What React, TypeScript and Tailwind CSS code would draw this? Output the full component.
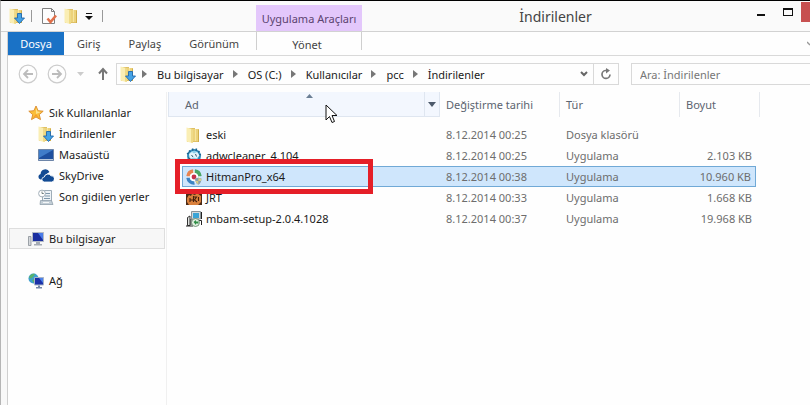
import type { ReactNode } from 'react'
import clsx from 'clsx'

const tabs = ['Giriş', 'Paylaş', 'Görünüm']
const crumbs = ['Bu bilgisayar', 'OS (C:)', 'Kullanıcılar', 'pcc', 'İndirilenler']

function FolderIcon({ download = false }: { download?: boolean }) {
  return (
    <svg width="16" height="16" viewBox="0 0 16 16" className="shrink-0" aria-hidden="true">
      <path d="M1 1h8v1h4v13H1z" fill="#dfc064" />
      <path d="M7 2h5v12H7z" fill="#ecd27a" />
      <path d="M.5.500L6 2v14L.5 14.500z" fill="#faeeb4" />
      <path d="M5 1.700l2 .5V16l-2-.4z" fill="#efda88" />
      <path d="M9 2h1v12H9z" fill="#f6e5a0" />
      <path d="M12 3h1v12h-1z" fill="#cfae4c" />
      {download && (
        <path d="M8.500 5.500h4v4.500h3l-5 5.500-5-5.500h3z" fill="#45a3e6" stroke="#1f69ae" strokeWidth=".9" />
      )}
    </svg>
  )
}

function PropertiesIcon() {
  return (
    <svg width="16" height="16" viewBox="0 0 16 16" aria-hidden="true">
      <path d="M.5.500h9l3 3v12H.5z" fill="#fdfdfd" stroke="#808080" />
      <path d="M9.500.500v3h3" fill="none" stroke="#808080" />
      <path d="M5.500 10.500l3 3.500 5.500-6.500" fill="none" stroke="#e0704a" strokeWidth="2.600" />
    </svg>
  )
}

function StarIcon() {
  return (
    <svg width="16" height="16" viewBox="0 0 16 16" aria-hidden="true">
      <path
        d="M8 1l2.100 4.700 5.100.5-3.900 3.400 1.200 5L8 12l-4.500 2.600 1.200-5L.8 6.200l5.100-.5z"
        fill="#fbbf3a"
        stroke="#d98a2b"
        strokeWidth=".9"
      />
      <path d="M8 3l1.400 3.500 3.600.4L8 9z" fill="#fde28c" />
      <path d="M8 9l3 4-3-1.700L4.800 13z" fill="#f59d2a" />
    </svg>
  )
}

function DesktopIcon() {
  return (
    <svg width="16" height="16" viewBox="0 0 16 16" aria-hidden="true">
      <path d="M.5 2.500h15v11H.5z" fill="#1d4f9f" stroke="#6d85a8" />
      <path d="M1 3h14L1 11z" fill="#3f7cc9" />
      <path d="M1 12h14v1H1z" fill="#b7c8dc" />
    </svg>
  )
}

function SkyDriveIcon() {
  return (
    <svg width="16" height="16" viewBox="0 0 16 16" aria-hidden="true">
      <path d="M2.500 11.500a2.900 2.900 0 0 1 .1-5.600A4.700 4.700 0 0 1 11.500 4L7 7l-2 4.500z" fill="#124a93" />
      <path
        d="M6.500 14a2.500 2.500 0 0 1-.2-5 3.600 3.600 0 0 1 6.600-1.200 3.100 3.100 0 0 1 .8 6.200z"
        fill="#124a93"
        stroke="#fff"
        strokeWidth=".8"
      />
    </svg>
  )
}

function RecentIcon() {
  return (
    <svg width="16" height="16" viewBox="0 0 16 16" aria-hidden="true">
      <path d="M4.500 1.500h9v11h-9z" fill="#eef3f7" stroke="#9fadb8" />
      <path d="M7 4.500h5M7 7h5M6 9.500h6" stroke="#7e97ab" />
      <path d="M2.500 11.500h11l1.500 4H2z" fill="#c3ced6" stroke="#8796a3" strokeWidth=".7" />
      <path d="M5 13.500h6" stroke="#f5f7f8" />
      <circle cx="4" cy="4.500" r="3.400" fill="#fff" stroke="#a3afb9" />
      <path d="M4 2.500v2h1.800" fill="none" stroke="#566" strokeWidth=".8" />
    </svg>
  )
}

function ComputerIcon() {
  return (
    <svg width="16" height="16" viewBox="0 0 16 16" aria-hidden="true">
      <path d="M.5 5.500H3v9H.5z" fill="#d5d8dc" stroke="#888e96" strokeWidth=".8" />
      <path d="M4.500 1.500h11v9h-11z" fill="#1a2ea0" stroke="#b3bac6" />
      <path d="M10 2h5v7z" fill="#4a7be8" />
      <path d="M8 11h4v2h2v1.500H6V13h2z" fill="#a5abb4" />
    </svg>
  )
}

function NetworkIcon() {
  return (
    <svg width="16" height="16" viewBox="0 0 16 16" aria-hidden="true">
      <circle cx="5.500" cy="5.500" r="5" fill="#3d9fd0" />
      <path d="M2 2.500c2-2 4-2 5-1.500L5 4 3 5.500 1 5zM4 7l3-1 1 2-2 2.500z" fill="#58b36b" />
      <path d="M6.500 4.500h9V12h-9z" fill="#1b31a8" stroke="#a9b4c6" />
      <path d="M11 5h4v5z" fill="#4d82ea" />
      <path d="M10 12.500h2V14h2v1.500H8V14h2z" fill="#7487a7" />
    </svg>
  )
}

function AdwCleanerIcon() {
  return (
    <svg width="16" height="16" viewBox="0 0 16 16" aria-hidden="true">
      <circle cx="8" cy="8" r="7" fill="#2f8dbd" />
      <path
        d="M1 6l2-1M3 2.500l1.500 1.500M6.500.500L7 3M10.500.500L10 3M13.500 3L12 4.500M15 6.500l-2 .5"
        stroke="#1c6490"
        strokeWidth="1.500"
      />
      <circle cx="8" cy="7.500" r="4.800" fill="#8bd0ea" />
      <path d="M3 6l3-2 2 1.500L11 4l2.500 3.500-3 3-3-1L4 11z" fill="#e3f4fa" />
      <path d="M5.500 7l1.500 2M9.500 6l1 2.500M2 9.500l3 2" fill="none" stroke="#345c75" />
    </svg>
  )
}

function HitmanIcon() {
  return (
    <svg width="16" height="16" viewBox="0 0 16 16" fill="none" aria-hidden="true">
      <circle cx="8" cy="8" r="6" fill="#fff" />
      <path d="M2 7.300A6 6 0 0 1 7.200 2" stroke="#e88450" strokeWidth="3.400" />
      <path d="M8.800 2A6 6 0 0 1 14 7.300" stroke="#4aa565" strokeWidth="3.400" />
      <path d="M2 8.700A6 6 0 0 0 8.500 14" stroke="#3c84c4" strokeWidth="3.400" />
      <circle cx="8" cy="8" r="2.400" fill="#c8304a" />
      <path d="M9 9.500l3.500-1 3 1c0 3-1 5-3.200 6.200C10 14.500 9 12.500 9 9.500z" fill="#8ba0ad" />
      <path d="M12.400 9v3H9.600c.4 1.500 1.400 2.500 2.700 3.300V12h2.800l.2-2.300z" fill="#d8cf8a" />
    </svg>
  )
}

function JrtIcon() {
  return (
    <svg width="16" height="16" viewBox="0 0 16 16" aria-hidden="true">
      <path d="M0 0h16v15H0z" fill="#4a2a16" />
      <path d="M1 8l2-3 2 1 1-2 3 1 2-2 4 3v6l-3 3H3L1 12z" fill="#d9803c" />
      <path d="M4 8v4M4 10h3M7.500 6v6M8 7h2.500l-2 3 2.500 2M12.500 7v4" fill="none" stroke="#43200d" strokeWidth="1.100" />
    </svg>
  )
}

function SetupIcon() {
  return (
    <svg width="16" height="16" viewBox="0 0 16 16" aria-hidden="true">
      <path d="M5.500.500h9v7.500h-9z" fill="#d5dadc" stroke="#8a9498" />
      <path d="M7 2h6v5H7z" fill="#3aa4d6" />
      <path d="M15.500 1v7M13 9.500h2.500V14" fill="none" stroke="#222" />
      <path d="M1.500 6.500L4 5v9.500H1.500z" fill="#dfe2df" stroke="#333" />
      <path d="M0 15h7M5 8v6" stroke="#222" />
      <circle cx="9.500" cy="11.500" r="4" fill="#e1efe1" stroke="#5d7d63" strokeWidth=".8" />
      <path d="M7.500 11l2.500-2v1.500h2.500v2H10V14z" fill="#2f8d46" />
    </svg>
  )
}

type FileRow = {
  name: string
  date: string
  type: string
  size: string
  icon: ReactNode
  selected?: boolean
}

const files: FileRow[] = [
  { name: 'eski', date: '8.12.2014 00:25', type: 'Dosya klasörü', size: '', icon: <FolderIcon /> },
  { name: 'adwcleaner_4.104', date: '8.12.2014 00:25', type: 'Uygulama', size: '2.103 KB', icon: <AdwCleanerIcon /> },
  { name: 'HitmanPro_x64', date: '8.12.2014 00:38', type: 'Uygulama', size: '10.960 KB', icon: <HitmanIcon />, selected: true },
  { name: 'JRT', date: '8.12.2014 00:33', type: 'Uygulama', size: '1.668 KB', icon: <JrtIcon /> },
  { name: 'mbam-setup-2.0.4.1028', date: '8.12.2014 00:37', type: 'Uygulama', size: '19.968 KB', icon: <SetupIcon /> },
]

const favorites = [
  { label: 'İndirilenler', icon: <FolderIcon download /> },
  { label: 'Masaüstü', icon: <DesktopIcon /> },
  { label: 'SkyDrive', icon: <SkyDriveIcon /> },
  { label: 'Son gidilen yerler', icon: <RecentIcon /> },
]

function TitleBar() {
  return (
    <header className="flex h-[31px] border-b border-[#d2d2d2] bg-[#fafafa]">
      <div className="flex w-[255px] shrink-0 items-center pl-2">
        <FolderIcon download />
        <span className="ml-[6px] h-3 w-px bg-[#999]" />
        <button type="button" aria-label="Özellikler" className="ml-[10px]">
          <PropertiesIcon />
        </button>
        <button type="button" aria-label="Yeni klasör" className="ml-[6px]">
          <FolderIcon />
        </button>
        <button type="button" aria-label="Araç çubuğunu özelleştir" className="ml-[5px]">
          <svg width="8" height="8" viewBox="0 0 8 8">
            <path d="M1 1h6v1H1zM0 4h8L4 8z" fill="#111" />
          </svg>
        </button>
        <span className="ml-[9px] h-3 w-px bg-[#999]" />
      </div>
      <div className="mt-1 flex w-[106px] shrink-0 items-center justify-center bg-[#e3c7fb] text-[#5b4370]">
        Uygulama Araçları
      </div>
      <h1 className="flex-1 text-center text-[14px] leading-[31px] text-[#444]">İndirilenler</h1>
      <div className="flex w-[61px] shrink-0 items-start pt-px">
        <button type="button" aria-label="Simge durumuna küçült" className="ml-[7px] h-5 w-[18px]">
          <svg width="18" height="20" viewBox="0 0 18 20">
            <path d="M1 12h8v2H1z" fill="#111" />
          </svg>
        </button>
        <button type="button" aria-label="Ekranı kapla" className="ml-[8px] h-5 w-[19px]">
          <svg width="19" height="20" viewBox="0 0 19 20">
            <path d="M1 6h10v8H1zM2 8v5h8V8z" fill="#111" fillRule="evenodd" />
          </svg>
        </button>
        <button type="button" aria-label="Kapat" className="h-5 flex-1 bg-[#c75050]" />
      </div>
    </header>
  )
}

function Ribbon() {
  return (
    <nav className="flex h-6 border-b border-[#d9d9d9] text-[#444]">
      <button type="button" className="w-14 shrink-0 bg-[#1a72c6] pb-px text-white">
        Dosya
      </button>
      <div className="flex w-[192px] shrink-0 gap-1 pl-px">
        {tabs.map((tab) => (
          <button key={tab} type="button" className="px-3">
            {tab}
          </button>
        ))}
      </div>
      <button
        type="button"
        className="h-[18px] w-[106px] shrink-0 border-x border-[#cfcfcf] pt-[5px] pr-1"
      >
        Yönet
      </button>
      <button type="button" aria-label="Şeridi genişlet" className="ml-auto self-center">
        <svg width="3" height="6" viewBox="0 0 3 6">
          <path d="M0 1l3 3" stroke="#999" strokeWidth="1.500" />
        </svg>
      </button>
    </nav>
  )
}

function CrumbArrow() {
  return (
    <svg width="5" height="8" viewBox="0 0 5 8" className="shrink-0" aria-hidden="true">
      <path d="M0 0l5 4-5 4z" fill="#777" />
    </svg>
  )
}

function AddressBar() {
  return (
    <div className="flex h-9 items-center pl-[10px]">
      <button type="button" aria-label="Geri">
        <svg width="20" height="20" viewBox="0 0 20 20" fill="none">
          <circle cx="10" cy="10" r="8.800" stroke="#ccc" strokeWidth="1.200" />
          <path d="M15 10H6M10 6l-4 4 4 4" stroke="#bcbcbc" strokeWidth="1.800" />
        </svg>
      </button>
      <button type="button" aria-label="İleri" className="ml-[9px]">
        <svg width="20" height="20" viewBox="0 0 20 20" fill="none">
          <circle cx="10" cy="10" r="8.800" stroke="#ccc" strokeWidth="1.200" />
          <path d="M5 10h9M10 6l4 4-4 4" stroke="#bcbcbc" strokeWidth="1.800" />
        </svg>
      </button>
      <button type="button" aria-label="Son konumlar" className="ml-[10px]">
        <svg width="8" height="4" viewBox="0 0 8 4">
          <path d="M0 0h7L3.500 4z" fill="#ccc" />
        </svg>
      </button>
      <button type="button" aria-label="Yukarı" className="ml-3">
        <svg width="12" height="14" viewBox="0 0 12 14" fill="none">
          <path d="M6 13V2M2 6.500L6 2l4 4.500" stroke="#777" strokeWidth="2" />
        </svg>
      </button>
      <div className="ml-[7px] flex h-[22px] flex-1 items-center border border-[#d9d9d9] pl-[3px] text-[#1a1a1a]">
        <FolderIcon download />
        <ol className="ml-[6px] flex items-center gap-[9px]">
          {crumbs.map((crumb) => (
            <li key={crumb} className="flex items-center gap-[10px] whitespace-nowrap">
              <CrumbArrow />
              <a href="#">{crumb}</a>
            </li>
          ))}
        </ol>
        <button type="button" aria-label="Önceki konumlar" className="ml-auto px-[5px]">
          <svg width="8" height="6" viewBox="0 0 8 6" fill="none">
            <path d="M1 1l3 3 3-3" stroke="#666" strokeWidth="2" />
          </svg>
        </button>
        <button
          type="button"
          aria-label="Yenile"
          className="flex h-full w-[25px] items-center justify-center border-l border-[#d9d9d9]"
        >
          <svg width="12" height="12" viewBox="0 0 12 12" fill="none">
            <path d="M7 2.500H5.500A4 4 0 1 0 10 6.500" stroke="#777" strokeWidth="1.700" />
            <path d="M6 0l4 2.500L6 5.500z" fill="#777" />
          </svg>
        </button>
      </div>
      <input
        type="search"
        aria-label="Ara: İndirilenler"
        placeholder="Ara: İndirilenler"
        className="ml-3 h-[22px] w-[179px] border border-r-0 border-[#d9d9d9] pl-2 outline-none placeholder:text-[#777]"
      />
    </div>
  )
}

function Sidebar() {
  return (
    <aside className="w-[159px] shrink-0 border-r border-[#f0f0f0] pt-[10px] pl-px text-[#1a1a1a]">
      <a href="#" className="flex h-[21px] items-center gap-[5px] pl-[19px]">
        <StarIcon />
        Sık Kullanılanlar
      </a>
      <ul>
        {favorites.map((item) => (
          <li key={item.label}>
            <a href="#" className="flex h-[21px] items-center gap-[5px] pl-[29px]">
              {item.icon}
              {item.label}
            </a>
          </li>
        ))}
      </ul>
      <a
        href="#"
        className="mt-[21px] mr-px flex h-[21px] items-center gap-[5px] border border-[#dedede] bg-[#f7f7f7] pl-[18px]"
      >
        <ComputerIcon />
        Bu bilgisayar
      </a>
      <a href="#" className="mt-[21px] flex h-[21px] items-center gap-[5px] pl-[19px]">
        <NetworkIcon />
        Ağ
      </a>
    </aside>
  )
}

function FileTable() {
  return (
    <table className="w-[592px] table-fixed border-separate border-spacing-0 text-[#6d6d6d]">
      <colgroup>
        <col className="w-[14px]" />
        <col className="w-[258px]" />
        <col className="w-[120px]" />
        <col className="w-[120px]" />
        <col className="w-[76px]" />
        <col className="w-[4px]" />
      </colgroup>
      <thead>
        <tr className="h-[25px] text-left text-[#5c6470]">
          <th
            colSpan={2}
            aria-sort="ascending"
            className="relative border-x border-b border-[#dfe6f0] bg-[#f3f7fe] p-0 font-normal"
          >
            <svg width="7" height="4" viewBox="0 0 7 4" className="absolute top-[2px] left-[137px]">
              <path d="M0 4l3.500-4L7 4z" fill="#6b7f94" />
            </svg>
            <div className="flex h-6 items-center">
              <button type="button" className="flex-1 pl-4 text-left">
                Ad
              </button>
              <button
                type="button"
                aria-label="Ada göre filtrele"
                className="flex h-full w-[15px] items-center justify-center border-l border-[#dfe6f0]"
              >
                <svg width="8" height="5" viewBox="0 0 8 5">
                  <path d="M0 0h8L4 5z" fill="#4d5a6b" />
                </svg>
              </button>
            </div>
          </th>
          <th className="border-r border-[#e6e9ee] p-0 pl-[6px] font-normal">Değiştirme tarihi</th>
          <th className="border-r border-[#e6e9ee] p-0 pl-[6px] font-normal">Tür</th>
          <th colSpan={2} className="border-r border-[#e6e9ee] p-0 pl-[6px] font-normal">
            Boyut
          </th>
        </tr>
      </thead>
      <tbody>
        <tr className="h-[7px]">
          <td colSpan={6} className="p-0" />
        </tr>
        {files.map((file) => {
          const cell = clsx('p-0', file.selected && 'border-y border-[#70a9d6] bg-[#cfe6fc]')
          return (
            <tr key={file.name} className="h-[21px]">
              <td className="p-0" />
              <td className={clsx(cell, 'relative text-[#1a1a1a]', file.selected && 'border-l')}>
                <div className={clsx('flex h-[19px] items-center gap-1', file.selected ? 'pl-[3px]' : 'pl-1')}>
                  {file.icon}
                  {file.name}
                </div>
                {file.selected && (
                  <span className="absolute -top-2 -left-2 z-10 h-[35px] w-[198px] border-5 border-[#e51f28]" />
                )}
              </td>
              <td className={clsx(cell, 'pl-[6px]')}>{file.date}</td>
              <td className={clsx(cell, 'pl-[6px]')}>{file.type}</td>
              <td className={clsx(cell, 'pr-1 text-right', file.selected && 'border-r')}>{file.size}</td>
              <td className="p-0" />
            </tr>
          )
        })}
      </tbody>
    </table>
  )
}

export default function App() {
  return (
    <div className="relative flex min-h-screen flex-col overflow-hidden border-t border-l border-t-black border-l-[#b5b5b5] bg-[#f8f8f8] font-['Noto_Sans','Open_Sans',sans-serif] text-[11px] leading-[15px]">
      <TitleBar />
      <div className="ml-[6px] flex flex-1 flex-col border-l border-[#cfcfcf] bg-[#fefefe]">
        <Ribbon />
        <AddressBar />
        <div className="flex flex-1">
          <Sidebar />
          <main className="flex-1 pl-px">
            <FileTable />
          </main>
        </div>
      </div>
      <svg
        width="13"
        height="20"
        viewBox="0 0 13 20"
        className="pointer-events-none absolute top-[103px] left-[324px]"
        aria-hidden="true"
      >
        <path d="M1 1v15l3.500-3.500L7 18.500l2.500-1L7 11.500h5z" fill="#fff" stroke="#111" />
      </svg>
    </div>
  )
}
